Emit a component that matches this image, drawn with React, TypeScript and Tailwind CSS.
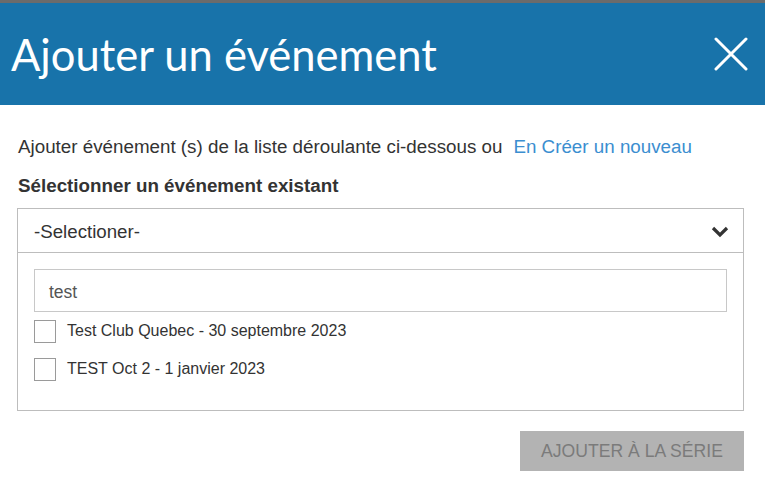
import { useState } from "react";

const events = [
  { id: 1, label: "Test Club Quebec - 30 septembre 2023" },
  { id: 2, label: "TEST Oct 2 - 1 janvier 2023" },
];

export default function App() {
  const [checked, setChecked] = useState<number[]>([]);

  const toggle = (id: number) =>
    setChecked((c) => (c.includes(id) ? c.filter((x) => x !== id) : [...c, id]));

  return (
    <div className="w-[765px] h-[478px] bg-white overflow-hidden font-['Liberation_Sans',Arial,sans-serif]">
      {/* top nav strip, mostly hidden behind the modal */}
      <div className="h-[3px] bg-[#6b6b6b] overflow-hidden">
        <div className="flex items-end h-[3px] text-[15px] leading-none text-[#2d3a44] -mt-[8px]">
          <span className="ml-[449px]">English</span>
          <span className="ml-[28px]">|</span>
          <span className="ml-[26px]">Français</span>
          <span className="ml-[44px]">À propos</span>
        </div>
      </div>

      {/* ===== HEADER ===== */}
      <div className="h-[102px] bg-[#1873aa] flex items-center justify-between pl-[11px] pr-[17px]">
        <h1 className="text-white text-[43.5px] font-normal font-['Lato',sans-serif] mt-[2px]">
          Ajouter un événement
        </h1>
        <button className="w-[34px] h-[34px] flex items-center justify-center">
          <svg width="34" height="34" viewBox="0 0 34 34" fill="none">
            <path d="M2 2L32 32M32 2L2 32" stroke="white" strokeWidth="3" strokeLinecap="round" />
          </svg>
        </button>
      </div>

      {/* ===== BODY ===== */}
      <div className="px-[17px] pt-[31px]">
        <p className="text-[18.8px] leading-[22px] text-[#333] pl-[1px]">
          Ajouter événement (s) de la liste déroulante ci-dessous ou
          <a href="#" className="ml-[11px] text-[#3b8ed0]">
            En Créer un nouveau
          </a>
        </p>

        <h2 className="mt-[17px] text-[18.8px] leading-[22px] font-bold text-[#333] pl-[1px]">
          Sélectionner un événement existant
        </h2>

        <div className="mt-[11px] w-[727px] border border-[#bdbdbd]">
          <div className="h-[44px] flex items-center justify-between pl-[16px] pr-[13px] border-b border-[#bdbdbd]">
            <span className="text-[18.7px] text-[#333] mt-[3px]">-Selectioner-</span>
            <svg width="20" height="14" viewBox="0 0 20 14">
              <path d="M3 4L10 11L17 4" stroke="#333" strokeWidth="3.2" fill="none" />
            </svg>
          </div>

          <div className="px-[16px] pt-[16px] pb-[29px]">
            <div className="h-[43px] border border-[#c8c8c8] flex items-center pl-[14px]">
              <span className="text-[17.5px] text-[#555] mt-[3px]">test</span>
            </div>

            <ul className="mt-[7px] flex flex-col gap-[14px]">
              {events.map((ev) => (
                <li key={ev.id} className="flex items-center gap-[11px]">
                  <button
                    onClick={() => toggle(ev.id)}
                    className="w-[22px] h-[23px] border border-[#9a9a9a] bg-white shrink-0"
                  />
                  <span className="text-[16px] text-[#333]">{ev.label}</span>
                </li>
              ))}
            </ul>
          </div>
        </div>

        <div className="mt-[20px] flex justify-end w-[727px]">
          <button className="w-[224px] h-[40px] bg-[#b3b3b3] text-[#7b7b7b] text-[17.6px]">
            AJOUTER À LA SÉRIE
          </button>
        </div>
      </div>
    </div>
  );
}
